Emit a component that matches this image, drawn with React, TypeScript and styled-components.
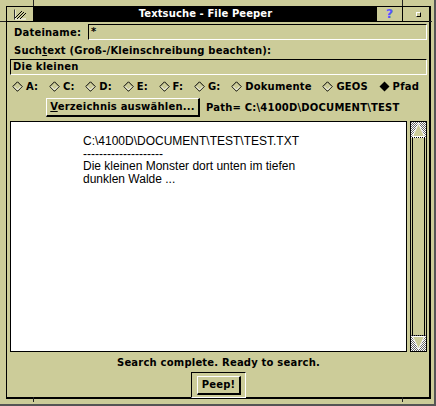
import React from 'react';
import styled, { createGlobalStyle } from 'styled-components';

const KHAKI = '#cccc99';
const UI_FONT = '"DejaVu Sans", "Liberation Sans", sans-serif';

const GlobalStyle = createGlobalStyle`
  html, body {
    margin: 0;
    padding: 0;
    background: ${KHAKI};
  }
  body {
    font-family: ${UI_FONT};
  }
`;

// outer resize border of the window
const Desk = styled.div`
  position: relative;
  width: 436px;
  height: 406px;
  box-sizing: border-box;
  background: ${KHAKI};
  padding: 6px 3px 5px 6px;
  border-right: 2px solid #555;
  border-bottom: 2px solid #555;
`;

// little marks on the resize border
const Tick = styled.span<{ $x?: number; $y?: number; $vertical?: boolean; $len: number; $right?: boolean; $bottom?: boolean }>`
  position: absolute;
  background: #222;
  ${(p) =>
    p.$vertical
      ? `width: 1px; height: ${p.$len}px; left: ${p.$x}px; ${p.$bottom ? 'bottom: 2px;' : 'top: 0;'}`
      : `height: 1px; width: ${p.$len}px; top: ${p.$y}px; ${p.$right ? 'right: 2px;' : 'left: 0;'}`}
`;

const Frame = styled.div`
  height: 100%;
  box-sizing: border-box;
  border-style: solid;
  border-color: #000;
  border-width: 1px 2px 2px 1px;
  display: flex;
  flex-direction: column;
`;

const TitleBar = styled.div`
  display: flex;
  height: 14px;
  border-bottom: 1px solid #000;
`;

const TitleButton = styled.div<{ $width: number }>`
  width: ${(p) => p.$width}px;
  flex: none;
  display: flex;
  align-items: center;
  justify-content: center;
  background: ${KHAKI};
  & + & {
    border-left: 1px solid #000;
  }
`;

const CloseBox = styled(TitleButton)`
  border-right: 1px solid #000;
`;

const TitleText = styled.div`
  flex: 1;
  background: #000;
  color: #fff;
  font: bold 10px/14px ${UI_FONT};
  letter-spacing: 0.1px;
  text-align: center;
  white-space: nowrap;
`;

const HelpMark = styled.span`
  color: #5555ff;
  font: bold 13px/14px ${UI_FONT};
`;

const MinMark = styled.span`
  width: 3px;
  height: 3px;
  margin-left: 4px;
  border-top: 1px solid #fff;
  border-left: 1px solid #fff;
  border-right: 1px solid #000;
  border-bottom: 1px solid #000;
  background: ${KHAKI};
`;

const Content = styled.div`
  flex: 1;
  display: flex;
  flex-direction: column;
  padding: 1px 2px 0 3px;
  font: bold 10px ${UI_FONT};
  letter-spacing: 0.2px;
  color: #000;
`;

const FieldRow = styled.div`
  display: flex;
  align-items: center;
  height: 16px;
`;

const Label = styled.div<{ $width?: number }>`
  ${(p) => (p.$width ? `width: ${p.$width}px; flex: none;` : '')}
  padding-left: 4px;
  box-sizing: border-box;
  line-height: 13px;
  white-space: nowrap;
`;

const TextField = styled.div<{ $top?: number }>`
  flex: 1;
  height: 16px;
  margin-top: ${(p) => p.$top ?? 0}px;
  box-sizing: border-box;
  border: 1px solid;
  border-color: #000 #fff #fff #000;
  padding: 0 2px;
  line-height: 14px;
  white-space: nowrap;
`;

const RadioRow = styled.div`
  display: flex;
  justify-content: space-between;
  align-items: center;
  height: 12px;
  margin-top: 7px;
  padding: 0 8px 0 2px;
`;

const RadioItem = styled.div`
  display: flex;
  align-items: center;
  gap: 3px;
  white-space: nowrap;
`;

const ButtonRow = styled.div`
  display: flex;
  align-items: center;
  margin-top: 6px;
  padding-left: 36px;
  gap: 6px;
`;

const Button = styled.div<{ $width?: number }>`
  height: 16px;
  ${(p) => (p.$width ? `width: ${p.$width}px;` : 'padding: 0 4px;')}
  box-sizing: content-box;
  border-style: solid;
  border-width: 1px 2px 2px 1px;
  border-color: #fff #000 #000 #fff;
  line-height: 15px;
  text-align: center;
  white-space: nowrap;
`;

const ViewerRow = styled.div`
  display: flex;
  gap: 3px;
  height: 231px;
  margin-top: 4px;
`;

const Viewer = styled.div`
  flex: 1;
  background: #fff;
  border: 1px solid #000;
  padding: 13px 0 0 72px;
  font: 12px/12.5px "Liberation Sans", Arial, sans-serif;
  letter-spacing: 0;
  color: #000;
  white-space: pre;
`;

const Scrollbar = styled.div`
  width: 17px;
  display: flex;
  flex-direction: column;
  box-sizing: border-box;
  border: 1px solid #000;
`;

const Track = styled.div`
  flex: 1;
  margin: 0 1px;
  border-left: 1px solid #000;
  border-right: 1px solid #000;
  background: ${KHAKI};
`;

const Status = styled.div`
  margin-top: 4px;
  height: 13px;
  line-height: 13px;
  text-align: center;
`;

const DefaultRing = styled.div`
  align-self: center;
  margin-top: 3px;
  border: 1px solid;
  border-color: #000 #fff #fff #000;
  padding: 3px 4px 2px 5px;
`;

const CloseIcon = () => (
  <svg width="13" height="11" viewBox="0 0 13 11">
    <path d="M1 1V10H12" stroke="#fff" fill="none" strokeWidth="1" />
    <path d="M0.5 0.5V10.5" stroke="#333" strokeWidth="1" />
    <path d="M3 10L10 3M6 10L12 4M1 9L8 2" stroke="#000" strokeWidth="1" />
  </svg>
);

const Diamond = ({ on }: { on?: boolean }) => (
  <svg width="11" height="11" viewBox="0 0 11 11">
    {on ? (
      <polygon points="5.5,0.5 10.5,5.5 5.5,10.5 0.5,5.5" fill="#000" />
    ) : (
      <>
        <polygon points="5.5,0.8 10.2,5.5 5.5,10.2 0.8,5.5" fill="none" stroke="#000" strokeWidth="1" />
        <polyline points="2,5.5 5.5,9 9,5.5" fill="none" stroke="#fff" strokeWidth="1" />
      </>
    )}
  </svg>
);

const ScrollArrow = ({ down }: { down?: boolean }) => (
  <svg width="15" height="16" viewBox="0 0 15 16" style={{ display: 'block' }}>
    <defs>
      <pattern id={down ? 'chkD' : 'chkU'} width="2" height="2" patternUnits="userSpaceOnUse">
        <rect width="2" height="2" fill="#fff" />
        <rect width="1" height="1" fill="#666" />
        <rect x="1" y="1" width="1" height="1" fill="#666" />
      </pattern>
    </defs>
    <rect width="15" height="16" fill={`url(#${down ? 'chkD' : 'chkU'})`} />
    {down ? (
      <>
        <polygon points="1.5,1.5 13.5,1.5 7.5,14" fill={KHAKI} stroke="#fff" strokeWidth="1" />
        <line x1="1" y1="0.5" x2="14" y2="0.5" stroke="#000" strokeDasharray="1 1" />
      </>
    ) : (
      <>
        <polygon points="7.5,1.5 13.5,14.5 1.5,14.5" fill={KHAKI} stroke="#fff" strokeWidth="1" />
        <line x1="1" y1="15.5" x2="14" y2="15.5" stroke="#000" strokeDasharray="1 1" />
      </>
    )}
  </svg>
);

const drives = ['A:', 'C:', 'D:', 'E:', 'F:', 'G:', 'Dokumente', 'GEOS', 'Pfad'];

const fileText = `C:\\4100D\\DOCUMENT\\TEST\\TEST.TXT
--------------------
Die kleinen Monster dort unten im tiefen
dunklen Walde ...`;

export default function App() {
  return (
    <>
      <GlobalStyle />
      <Desk>
        <Tick $vertical $x={33} $len={6} />
        <Tick $vertical $x={402} $len={6} />
        <Tick $vertical $bottom $x={33} $len={5} />
        <Tick $vertical $bottom $x={402} $len={5} />
        <Tick $y={21} $len={6} />
        <Tick $y={21} $right $len={3} />
        <Frame>
          <TitleBar>
            <CloseBox $width={26}>
              <CloseIcon />
            </CloseBox>
            <TitleText>Textsuche - File Peeper</TitleText>
            <TitleButton $width={25}>
              <HelpMark>?</HelpMark>
            </TitleButton>
            <TitleButton $width={26}>
              <MinMark />
            </TitleButton>
          </TitleBar>
          <Content>
            <FieldRow style={{ marginTop: 1 }}>
              <Label $width={78}>Dateiname:</Label>
              <TextField>*</TextField>
            </FieldRow>
            <Label style={{ marginTop: 4 }}>
              Such<u>t</u>ext (Groß-/Kleinschreibung beachten):
            </Label>
            <FieldRow>
              <TextField $top={3}>Die kleinen</TextField>
            </FieldRow>
            <RadioRow>
              {drives.map((d) => (
                <RadioItem key={d}>
                  <Diamond on={d === 'Pfad'} />
                  {d}
                </RadioItem>
              ))}
            </RadioRow>
            <ButtonRow>
              <Button $width={151}>
                <u>V</u>erzeichnis auswählen...
              </Button>
              <span>Path= C:\4100D\DOCUMENT\TEST</span>
            </ButtonRow>
            <ViewerRow>
              <Viewer>{fileText}</Viewer>
              <Scrollbar>
                <ScrollArrow />
                <Track />
                <ScrollArrow down />
              </Scrollbar>
            </ViewerRow>
            <Status>Search complete. Ready to search.</Status>
            <DefaultRing>
              <Button $width={41}>Peep!</Button>
            </DefaultRing>
          </Content>
        </Frame>
      </Desk>
    </>
  );
}
